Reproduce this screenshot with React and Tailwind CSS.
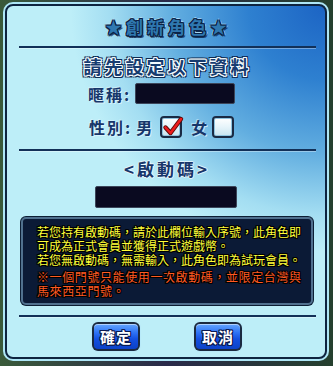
import React from "react";

const CJK = "font-['Noto_Sans_CJK_TC','Noto_Sans_CJK_SC',sans-serif]";

function Rule() {
  return <div className="ml-[12px] w-[297px] h-[2px] bg-[#123058] shadow-[0_1px_0_rgba(255,255,255,0.35)]" />;
}

function CheckBox({ checked }) {
  return (
    <div className="relative w-[22px] h-[22px] rounded-[4px] border-2 border-[#1a2a44] bg-[linear-gradient(180deg,#ffffff_0%,#e6f4fa_50%,#c8e4f0_100%)] shadow-[inset_0_0_0_1px_#8fc4e0]">
      {checked && (
        <svg className="absolute left-[-1px] top-[-3px]" width="24" height="24" viewBox="0 0 24 24">
          <path d="M4.5 12.5 L9.5 18 L20 4" fill="none" stroke="#5a0a0a" strokeWidth="4.4" strokeLinecap="round" strokeLinejoin="round" />
          <path d="M4.5 12.5 L9.5 18 L20 4" fill="none" stroke="#ee1c1c" strokeWidth="2.6" strokeLinecap="round" strokeLinejoin="round" />
        </svg>
      )}
    </div>
  );
}

function Btn({ children }) {
  return (
    <div className="w-[48px] h-[29px] rounded-[6px] bg-[#1b2a40] p-[2px] shadow-[0_0_0_1px_rgba(180,230,250,0.5)]">
      <div className="h-full rounded-[4px] bg-[linear-gradient(180deg,#64a6ff_0%,#2e72f4_35%,#1450e0_60%,#0c42c8_100%)] shadow-[inset_0_1px_0_rgba(255,255,255,0.5)] flex items-center justify-center">
        <span className={`${CJK} font-bold text-[15px] leading-none tracking-[1px] text-white [text-shadow:1px_0_0_#0a1a50,-1px_0_0_#0a1a50,0_1px_0_#0a1a50,0_-1px_0_#0a1a50,1px_1px_0_#0a1a50,-1px_-1px_0_#0a1a50,1px_-1px_0_#0a1a50,-1px_1px_0_#0a1a50]`}>
          {children}
        </span>
      </div>
    </div>
  );
}

export default function App() {
  const yellow =
    "text-[#ffff3a] [text-shadow:1px_0_0_#000,-1px_0_0_#000,0_1px_0_#000,0_-1px_0_#000,1px_1px_0_#000,-1px_-1px_0_#000,1px_-1px_0_#000,-1px_1px_0_#000]";
  const red =
    "text-[#ff5a22] tracking-[0.6px] [text-shadow:1px_0_0_#000,-1px_0_0_#000,0_1px_0_#000,0_-1px_0_#000,1px_1px_0_#000,-1px_-1px_0_#000,1px_-1px_0_#000,-1px_1px_0_#000]";
  const label =
    "text-[#17366a] font-bold text-[16px] leading-none [text-shadow:1px_1px_0_rgba(230,248,255,0.7),-1px_-1px_0_rgba(230,248,255,0.5)]";

  return (
    <div className={`w-[333px] h-[366px] overflow-hidden bg-[linear-gradient(90deg,#3a5a3a_0%,#2a2a4a_50%,#25402e_100%)] pt-[2px] pl-[3px] ${CJK}`}>
      <div className="w-[326px] h-[359px] rounded-[10px] bg-[#aee6f6] p-[2px]">
        <div className="h-full rounded-[8px] border-2 border-[#0e2440] bg-[radial-gradient(ellipse_80%_70%_at_100%_0%,#1c64c4_0%,#2e80d0_30%,#62aee0_60%,#a4def2_85%,#bdeef8_100%)] flex flex-col">
          {/* title */}
          <div className="h-[40px] flex items-center justify-center pl-[4px]">
            <span className="text-[17px] font-bold leading-none tracking-[4px] text-[#2f78b0] [text-shadow:1px_0_0_#0a2246,-1px_0_0_#0a2246,0_1px_0_#0a2246,0_-1px_0_#0a2246,1px_1px_0_#0a2246,-1px_-1px_0_#0a2246,1px_-1px_0_#0a2246,-1px_1px_0_#0a2246,2px_0_0_rgba(200,236,250,0.7),-2px_0_0_rgba(200,236,250,0.7),0_2px_0_rgba(10,34,70,0.8),0_-2px_0_rgba(200,236,250,0.7),2px_2px_0_rgba(10,34,70,0.7)]">
              ★創新角色★
            </span>
          </div>
          <Rule />
          {/* subtitle */}
          <div className="h-[35px] flex items-center justify-center pl-[3px]">
            <span className="text-[18px] font-bold leading-none tracking-[3px] text-[#173c70] [text-shadow:1px_0_0_#f4fbff,-1px_0_0_#f4fbff,0_1px_0_#f4fbff,0_-1px_0_#f4fbff,1px_1px_0_#f4fbff,-1px_-1px_0_#f4fbff,1px_-1px_0_#f4fbff,-1px_1px_0_#f4fbff,2px_0_0_#0e2a50,-2px_0_0_#0e2a50,0_2px_0_#0e2a50,0_-2px_0_#0e2a50,2px_2px_0_#0e2a50,-2px_-2px_0_#0e2a50,2px_-2px_0_#0e2a50,-2px_2px_0_#0e2a50]">
              請先設定以下資料
            </span>
          </div>
          {/* nickname */}
          <div className="h-[21px] flex items-center pl-[81px]">
            <span className={`${label} tracking-[2px]`}>暱稱:</span>
            <div className="ml-[4px] w-[100px] h-[21px] rounded-[2px] bg-[#0a0a20] border border-[#3c465a]" />
          </div>
          {/* gender */}
          <div className="mt-[12px] h-[22px] flex items-center pl-[82px]">
            <span className={`${label} tracking-[2px]`}>性別:</span>
            <span className={`${label} ml-[4px]`}>男</span>
            <div className="ml-[8px]">
              <CheckBox checked />
            </div>
            <span className={`${label} ml-[9px]`}>女</span>
            <div className="ml-[5px]">
              <CheckBox />
            </div>
          </div>
          <div className="mt-[11px]">
            <Rule />
          </div>
          {/* code */}
          <div className="h-[35px] flex items-center justify-center pl-[2px]">
            <span className="text-[17px] font-bold leading-none tracking-[3px] text-[#17366a] [text-shadow:1px_0_0_rgba(240,250,255,0.8),-1px_0_0_rgba(240,250,255,0.8),0_1px_0_rgba(240,250,255,0.8),0_-1px_0_rgba(240,250,255,0.8)]">
              &lt;啟動碼&gt;
            </span>
          </div>
          <div className="ml-[88px] w-[142px] h-[22px] rounded-[2px] bg-[#0a0a20] border border-[#3c465a]" />
          {/* info */}
          <div className="mt-[9px] ml-[14px] w-[292px] h-[88px] rounded-[5px] bg-[#0b1a36] border-2 border-[#50708e] shadow-[0_0_0_1px_#0c1e34] pt-[6px] pl-[14px] text-[12px] leading-[14px]">
            <div className={yellow}>若您持有啟動碼，請於此欄位輸入序號，此角色即</div>
            <div className={yellow}>可成為正式會員並獲得正式遊戲幣。</div>
            <div className={yellow}>若您無啟動碼，無需輸入，此角色即為試玩會員。</div>
            <div className={`${red} mt-[3px]`}>※一個門號只能使用一次啟動碼，並限定台灣與</div>
            <div className={red}>馬來西亞門號。</div>
          </div>
          <div className="mt-[10px]">
            <Rule />
          </div>
          <div className="mt-[5px] flex justify-center gap-[54px] pl-[2px]">
            <Btn>確定</Btn>
            <Btn>取消</Btn>
          </div>
        </div>
      </div>
    </div>
  );
}
